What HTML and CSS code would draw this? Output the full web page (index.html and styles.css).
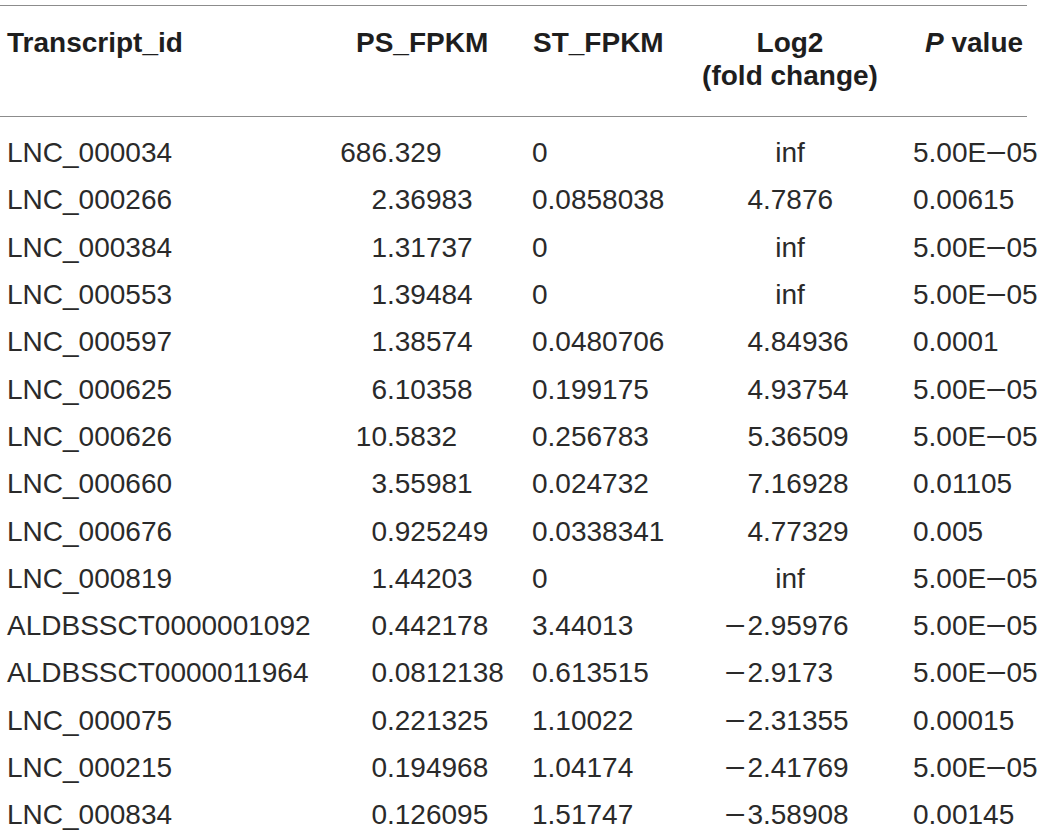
FILE: index.html
```html
<!DOCTYPE html>
<html lang="en">
<head>
<meta charset="utf-8">
<title>Transcripts</title>
<link rel="stylesheet" href="styles.css">
</head>
<body>
<table class="data">
  <colgroup>
    <col class="c1"><col class="c2"><col class="c3"><col class="c4"><col class="c5">
  </colgroup>
  <thead>
    <tr>
      <th class="h-id">Transcript_id</th>
      <th class="h-ps">PS_FPKM</th>
      <th class="h-st">ST_FPKM</th>
      <th class="h-log">Log2<br>(fold change)</th>
      <th class="h-p"><i>P</i> value</th>
    </tr>
  </thead>
  <tbody>
    <tr><td class="id">LNC_000034</td><td class="ps"><span class="int">686</span>.329</td><td class="st">0</td><td class="log center">inf</td><td class="p">5.00E<span class="neg">−</span>05</td></tr>
    <tr><td class="id">LNC_000266</td><td class="ps"><span class="int">2</span>.36983</td><td class="st">0.0858038</td><td class="log"><span class="int">4</span>.7876</td><td class="p">0.00615</td></tr>
    <tr><td class="id">LNC_000384</td><td class="ps"><span class="int">1</span>.31737</td><td class="st">0</td><td class="log center">inf</td><td class="p">5.00E<span class="neg">−</span>05</td></tr>
    <tr><td class="id">LNC_000553</td><td class="ps"><span class="int">1</span>.39484</td><td class="st">0</td><td class="log center">inf</td><td class="p">5.00E<span class="neg">−</span>05</td></tr>
    <tr><td class="id">LNC_000597</td><td class="ps"><span class="int">1</span>.38574</td><td class="st">0.0480706</td><td class="log"><span class="int">4</span>.84936</td><td class="p">0.0001</td></tr>
    <tr><td class="id">LNC_000625</td><td class="ps"><span class="int">6</span>.10358</td><td class="st">0.199175</td><td class="log"><span class="int">4</span>.93754</td><td class="p">5.00E<span class="neg">−</span>05</td></tr>
    <tr><td class="id">LNC_000626</td><td class="ps"><span class="int">10</span>.5832</td><td class="st">0.256783</td><td class="log"><span class="int">5</span>.36509</td><td class="p">5.00E<span class="neg">−</span>05</td></tr>
    <tr><td class="id">LNC_000660</td><td class="ps"><span class="int">3</span>.55981</td><td class="st">0.024732</td><td class="log"><span class="int">7</span>.16928</td><td class="p">0.01105</td></tr>
    <tr><td class="id">LNC_000676</td><td class="ps"><span class="int">0</span>.925249</td><td class="st">0.0338341</td><td class="log"><span class="int">4</span>.77329</td><td class="p">0.005</td></tr>
    <tr><td class="id">LNC_000819</td><td class="ps"><span class="int">1</span>.44203</td><td class="st">0</td><td class="log center">inf</td><td class="p">5.00E<span class="neg">−</span>05</td></tr>
    <tr><td class="id">ALDBSSCT0000001092</td><td class="ps"><span class="int">0</span>.442178</td><td class="st">3.44013</td><td class="log"><span class="int"><span class="neg">−</span>2</span>.95976</td><td class="p">5.00E<span class="neg">−</span>05</td></tr>
    <tr><td class="id">ALDBSSCT0000011964</td><td class="ps"><span class="int">0</span>.0812138</td><td class="st">0.613515</td><td class="log"><span class="int"><span class="neg">−</span>2</span>.9173</td><td class="p">5.00E<span class="neg">−</span>05</td></tr>
    <tr><td class="id">LNC_000075</td><td class="ps"><span class="int">0</span>.221325</td><td class="st">1.10022</td><td class="log"><span class="int"><span class="neg">−</span>2</span>.31355</td><td class="p">0.00015</td></tr>
    <tr><td class="id">LNC_000215</td><td class="ps"><span class="int">0</span>.194968</td><td class="st">1.04174</td><td class="log"><span class="int"><span class="neg">−</span>2</span>.41769</td><td class="p">5.00E<span class="neg">−</span>05</td></tr>
    <tr><td class="id">LNC_000834</td><td class="ps"><span class="int">0</span>.126095</td><td class="st">1.51747</td><td class="log"><span class="int"><span class="neg">−</span>3</span>.58908</td><td class="p">0.00145</td></tr>
  </tbody>
</table>
</body>
</html>
```

FILE: styles.css
```css
html, body {
  margin: 0;
  padding: 0;
  background: #ffffff;
}

body {
  font-family: "Liberation Sans", Arial, sans-serif;
  font-size: 28px;
  color: #2a2a2a;
}

.data {
  margin-top: 5px;
  width: 1027px;
  table-layout: fixed;
  border-collapse: collapse;
  white-space: nowrap;
}

.c1 { width: 330px; }
.c2 { width: 195px; }
.c3 { width: 165px; }
.c4 { width: 200px; }
.c5 { width: 137px; }

.data th,
.data td {
  padding: 0;
  text-align: left;
  overflow: visible;
}

.data thead tr {
  border-top: 1px solid #8c8c8c;
  border-bottom: 1px solid #8c8c8c;
}

.data th {
  font-weight: bold;
  color: #1e1e1e;
  line-height: 33.5px;
  vertical-align: top;
  padding-top: 19.5px;
  padding-bottom: 23px;
}

.h-id { padding-left: 7px !important; }
.h-ps { padding-left: 26px !important; }
.h-st { padding-left: 8px !important; }
.h-log { text-align: center !important; }
.h-p { padding-left: 35px !important; }

.data td {
  line-height: 47.3px;
  font-weight: normal;
}

.data tbody tr:first-child td {
  padding-top: 12.7px;
}

.id { padding-left: 7px !important; }
.st { padding-left: 7px !important; }
.p { padding-left: 23px !important; }

.int {
  display: inline-block;
  text-align: right;
}

.ps .int { width: 57px; }
.log .int { width: 73px; }

.log.center { text-align: center; }

.neg {
  display: inline-block;
  transform: scaleX(1.3);
}

.log .neg {
  margin-right: 4px;
}

.p .neg {
  margin: 0 2px;
}
```
